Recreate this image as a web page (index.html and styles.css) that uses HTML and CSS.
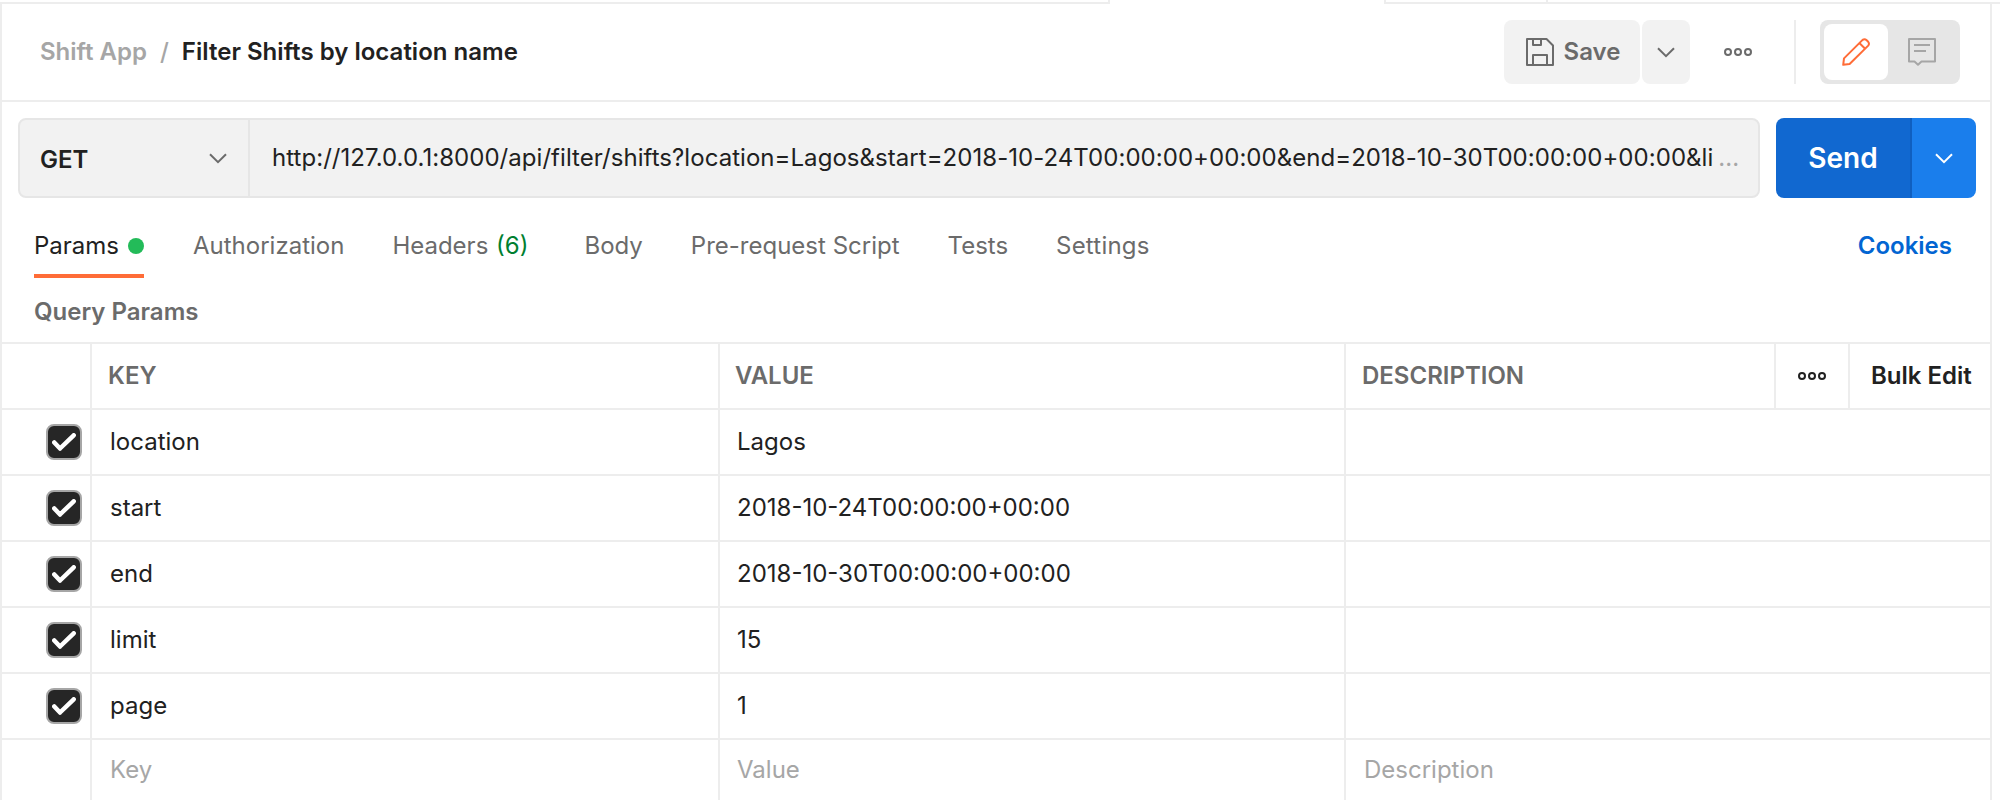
FILE: index.html
```html
<!DOCTYPE html>
<html lang="en">
<head>
<meta charset="utf-8">
<title>Filter Shifts by location name</title>
<link rel="stylesheet" href="styles.css">
</head>
<body>
<div class="tabstrip"><span class="strip strip-left"></span><span class="strip strip-mid"></span><span class="strip strip-right"></span></div>
<main class="panel">
  <header class="topbar">
    <div class="crumbs"><span class="crumb-parent">Shift App</span><span class="crumb-sep">/</span><h1 class="crumb-title">Filter Shifts by location name</h1></div>
    <div class="actions">
      <button class="btn save">
        <svg class="icon-save" width="28" height="28" viewBox="0 0 28 28" fill="none" stroke="currentColor" stroke-width="2" stroke-linejoin="round"><path d="M1 1H20.500L27 7.500V27H1Z"/><path d="M7 1V7H15V1"/><path d="M7 27V17H21V27"/></svg>
        <span class="save-label">Save</span>
      </button>
      <button class="btn save-more"><svg width="18" height="11" viewBox="0 0 18 11" fill="none" stroke="currentColor" stroke-width="2"><path d="M1 1.200L9 9.200L17 1.200"/></svg></button>
      <button class="btn dots"><svg width="28" height="8" viewBox="0 0 28 8" fill="none" stroke="currentColor" stroke-width="2"><circle cx="4" cy="4" r="3"/><circle cx="14" cy="4" r="3"/><circle cx="24" cy="4" r="3"/></svg></button>
      <span class="divider"></span>
      <div class="toggle">
        <button class="btn toggle-item active"><svg width="28" height="28" viewBox="0 0 28 28" fill="none" stroke="currentColor" stroke-width="2" stroke-linejoin="round"><path d="M1.200 26.800L2 20.400L20.600 1.900Q22.600 0.400 24.400 2L26.200 3.800Q27.700 5.600 26.200 7.600L7.600 26Z"/><path d="M17.600 5.200L22.900 10.500"/></svg></button>
        <button class="btn toggle-item"><svg width="28" height="28" viewBox="0 0 28 28" fill="none" stroke="currentColor" stroke-width="2" stroke-linejoin="round"><path d="M1 1H27V23.500H13.500L10 26.800L6.500 23.500H1Z"/><path d="M6 7H22M6 13H18"/></svg></button>
      </div>
    </div>
  </header>
  <section class="request">
    <div class="url-box">
      <div class="method"><span class="method-name">GET</span><svg width="18" height="11" viewBox="0 0 18 11" fill="none" stroke="currentColor" stroke-width="2"><path d="M1 1.200L9 9.200L17 1.200"/></svg></div>
      <div class="url"><span class="url-text">http://127.0.0.1:8000/api/filter/shifts?location=Lagos&amp;start=2018-10-24T00:00:00+00:00&amp;end=2018-10-30T00:00:00+00:00&amp;li</span><span class="url-more">...</span></div>
    </div>
    <div class="send-group">
      <button class="btn send">Send</button>
      <button class="btn send-more"><svg width="18" height="11" viewBox="0 0 18 11" fill="none" stroke="currentColor" stroke-width="2"><path d="M1 1.200L9 9.200L17 1.200"/></svg></button>
    </div>
  </section>
  <nav class="tabs">
    <a class="tab tab-active">Params<i class="dot"></i></a>
    <a class="tab tab-auth">Authorization</a>
    <a class="tab tab-headers">Headers <span class="count">(6)</span></a>
    <a class="tab tab-body">Body</a>
    <a class="tab tab-script">Pre-request Script</a>
    <a class="tab tab-tests">Tests</a>
    <a class="tab tab-settings">Settings</a>
    <a class="cookies">Cookies</a>
  </nav>
  <h2 class="section-title">Query Params</h2>
  <div class="grid">
    <div class="row head"><div class="cell"></div><div class="cell">KEY</div><div class="cell value">VALUE</div><div class="cell">DESCRIPTION</div><div class="cell menu"><svg width="28" height="8" viewBox="0 0 28 8" fill="none" stroke="currentColor" stroke-width="2"><circle cx="4" cy="4" r="3"/><circle cx="14" cy="4" r="3"/><circle cx="24" cy="4" r="3"/></svg></div><div class="cell bulk">Bulk Edit</div></div>
    <div class="row"><div class="cell pick"><span class="check"><svg width="24" height="18" viewBox="0 0 24 18" fill="none" stroke="#fff" stroke-width="4.500" stroke-linecap="round" stroke-linejoin="round"><path d="M2.300 9.500L8 15.500L21.700 2.300"/></svg></span></div><div class="cell">location</div><div class="cell value">Lagos</div><div class="cell"></div></div>
    <div class="row"><div class="cell pick"><span class="check"><svg width="24" height="18" viewBox="0 0 24 18" fill="none" stroke="#fff" stroke-width="4.500" stroke-linecap="round" stroke-linejoin="round"><path d="M2.300 9.500L8 15.500L21.700 2.300"/></svg></span></div><div class="cell">start</div><div class="cell value">2018-10-24T00:00:00+00:00</div><div class="cell"></div></div>
    <div class="row"><div class="cell pick"><span class="check"><svg width="24" height="18" viewBox="0 0 24 18" fill="none" stroke="#fff" stroke-width="4.500" stroke-linecap="round" stroke-linejoin="round"><path d="M2.300 9.500L8 15.500L21.700 2.300"/></svg></span></div><div class="cell">end</div><div class="cell value">2018-10-30T00:00:00+00:00</div><div class="cell"></div></div>
    <div class="row"><div class="cell pick"><span class="check"><svg width="24" height="18" viewBox="0 0 24 18" fill="none" stroke="#fff" stroke-width="4.500" stroke-linecap="round" stroke-linejoin="round"><path d="M2.300 9.500L8 15.500L21.700 2.300"/></svg></span></div><div class="cell">limit</div><div class="cell value">15</div><div class="cell"></div></div>
    <div class="row"><div class="cell pick"><span class="check"><svg width="24" height="18" viewBox="0 0 24 18" fill="none" stroke="#fff" stroke-width="4.500" stroke-linecap="round" stroke-linejoin="round"><path d="M2.300 9.500L8 15.500L21.700 2.300"/></svg></span></div><div class="cell">page</div><div class="cell value">1</div><div class="cell"></div></div>
    <div class="row blank"><div class="cell"></div><div class="cell">Key</div><div class="cell value">Value</div><div class="cell">Description</div></div>
  </div>
</main>
</body>
</html>
```
FILE: styles.css
```css
* { box-sizing: border-box; }
body {
  margin: 0;
  width: 2000px;
  height: 800px;
  overflow: hidden;
  background: #fff;
  color: #212121;
  font: 24px/32px Inter, "Liberation Sans", sans-serif;
}
svg { display: block; flex: none; }
.btn {
  border: 0;
  margin: 0;
  padding: 0;
  font: inherit;
  color: #6b6b6b;
  background: none;
  display: flex;
  align-items: center;
  justify-content: center;
}
.tabstrip { display: flex; height: 4px; }
.strip { border-bottom: 2px solid #ededed; }
.strip-left { width: 1110px; border-right: 2px solid #ededed; }
.strip-mid { width: 164px; margin-left: 274px; border-left: 2px solid #ededed; border-right: 2px solid #ededed; }
.strip-right { flex: 1; }
.panel {
  width: 1992px;
  height: 796px;
  overflow: hidden;
  border-left: 2px solid #ededed;
  border-right: 2px solid #ededed;
}
.topbar {
  height: 98px;
  display: flex;
  justify-content: space-between;
  align-items: flex-start;
  padding: 16px 30px 0 38px;
  border-bottom: 2px solid #ededed;
}
.crumbs { display: flex; height: 64px; align-items: center; }
.crumb-parent, .crumb-sep { color: #a6a6a6; }
.crumb-parent { font-weight: 600; }
.crumb-sep { margin: 0 13px; font-weight: 500; }
.crumb-title { margin: 0; font-size: 24px; font-weight: 600; letter-spacing: 0.02px; }
.actions { display: flex; height: 64px; }
.save, .save-more { background: #f2f2f2; border-radius: 8px; }
.save { width: 136px; gap: 10px; padding-left: 2px; font-weight: 600; }
.save-more { width: 48px; margin-left: 2px; }
.dots { width: 28px; margin-left: 34px; }
.divider { width: 2px; margin: 0 24px 0 42px; background: #ededed; }
.toggle { display: flex; width: 140px; padding: 4px; border-radius: 8px; background: #e6e6e6; }
.toggle-item { width: 68px; color: #a6a6a6; border-radius: 8px; }
.toggle-item.active { width: 64px; background: #fff; color: #ff6c37; }
.request { display: flex; gap: 16px; padding: 16px 14px 0 16px; }
.url-box {
  display: flex;
  width: 1742px;
  height: 80px;
  border: 2px solid #e6e6e6;
  border-radius: 8px;
  background: #f2f2f2;
}
.method {
  display: flex;
  align-items: center;
  justify-content: space-between;
  width: 230px;
  padding: 2px 21px 0 20px;
  border-right: 2px solid #e6e6e6;
  color: #6b6b6b;
}
.method-name { color: #212121; font-weight: 600; padding-top: 1px; }
.method svg { margin-bottom: 2px; }
.url { display: flex; align-items: center; padding-left: 22px; white-space: nowrap; }
.url-text { letter-spacing: 0.045px; }
.url-more { color: #a6a6a6; margin-left: 5px; }
.send-group { display: flex; width: 200px; border-radius: 8px; overflow: hidden; }
.send { width: 136px; background: #1168d0; border-right: 2px solid #0f5fc0; color: #fff; font-size: 28px; font-weight: 600; }
.send-more { width: 64px; background: #1a7eec; color: #fff; }
.tabs { display: flex; height: 80px; padding: 0 38px 0 32px; color: #6b6b6b; line-height: 96px; white-space: nowrap; }
.tab-active { display: flex; align-items: flex-start; justify-content: space-between; width: 110px; border-bottom: 4px solid #ff6c37; color: #212121; margin-right: 49px; }
.dot { width: 16px; height: 16px; margin-top: 40px; border-radius: 50%; background: #23bb59; }
.tab-auth { margin-right: 48px; }
.tab-headers { margin-right: 56px; }
.tab-body, .tab-script, .tab-tests { margin-right: 48px; }
.tab-settings { letter-spacing: 0.2px; }
.count { margin-left: 1px; color: #007f31; }
.cookies { margin-left: auto; color: #0265d2; font-weight: 600; }
.section-title { margin: 0; height: 64px; padding: 18px 32px 0; color: #6b6b6b; font-size: 24px; font-weight: 600; }
.grid { border-top: 2px solid #ededed; }
.row { display: grid; grid-template-columns: 90px 628px 626px 1fr; height: 66px; border-bottom: 2px solid #ededed; }
.head { grid-template-columns: 90px 628px 626px 430px 74px 1fr; color: #6b6b6b; font-weight: 600; }
.cell { display: flex; align-items: center; padding-left: 18px; border-right: 2px solid #ededed; }
.cell:last-child { border-right: 0; }
.cell.value { padding-left: 17px; }
.head .cell { padding-left: 16px; }
.head .value { padding-left: 15px; }
.head .menu { padding: 0; justify-content: center; color: #212121; }
.head .bulk { padding-left: 21px; color: #212121; }
.row .pick { padding-left: 44px; }
.check { display: flex; align-items: center; justify-content: center; width: 36px; height: 36px; border: 2px solid #a6a6a6; border-radius: 8px; background: #262626; flex: none; }
.blank { color: #a6a6a6; height: 60px; border-bottom: 0; }
```
